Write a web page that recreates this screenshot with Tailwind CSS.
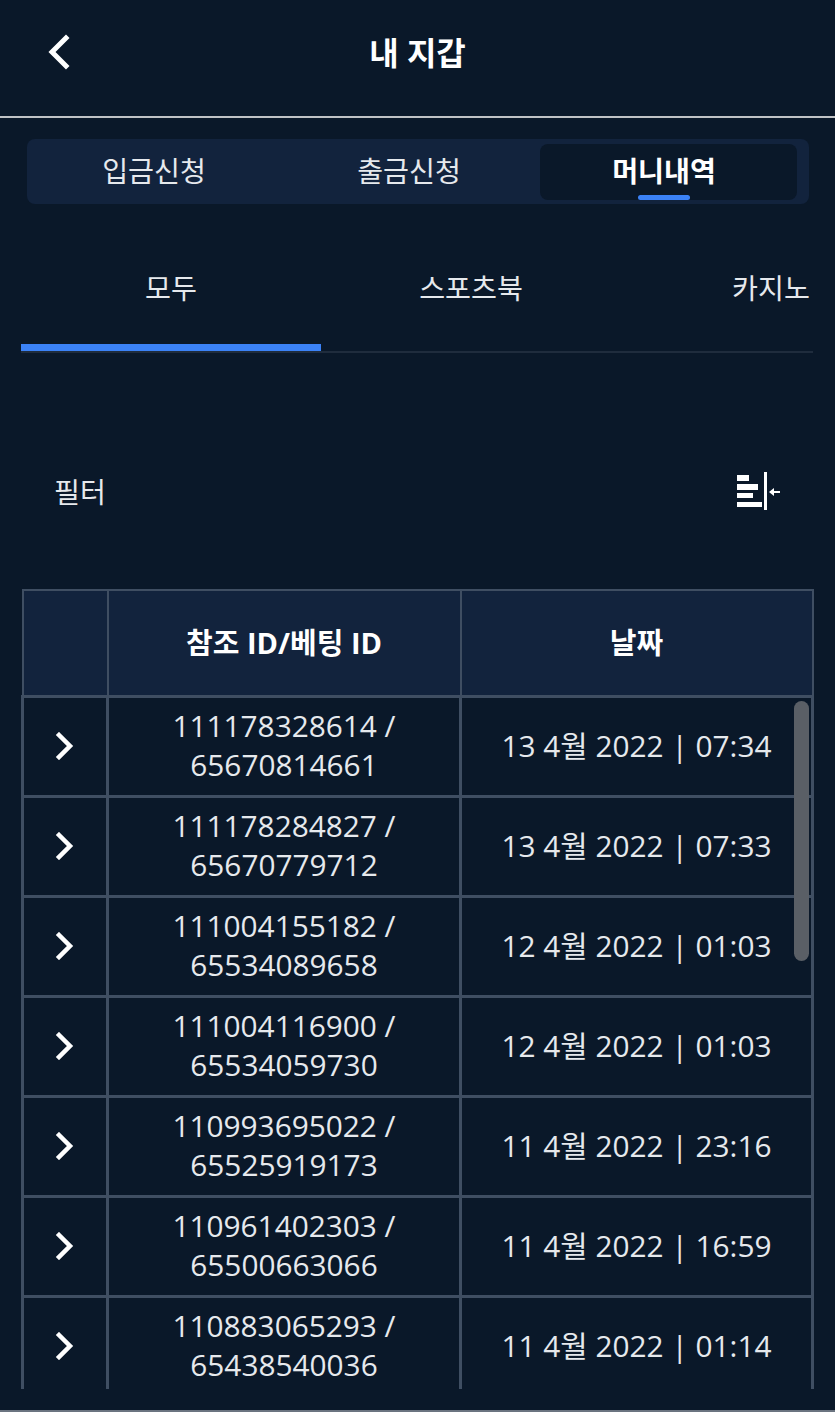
<!DOCTYPE html>
<html lang="ko">
<head>
  <meta charset="UTF-8">
  <meta name="viewport" content="width=device-width, initial-scale=1.0">
  <title>내 지갑</title>
  <script src="https://cdn.jsdelivr.net/npm/@tailwindcss/browser@4"></script>
</head>
<body class="bg-[#0a1829] text-white font-['Noto_Sans','Noto_Sans_CJK_KR',sans-serif]">
  <div class="h-[1412px] w-[835px] overflow-hidden flex flex-col border-b-2 border-[#6b7480]">
    <!-- Header -->
    <header class="h-[118px] shrink-0 flex items-center justify-center relative border-b-2 border-[#bfc2c5] pb-[10px]">
      <svg class="absolute left-[46px] top-[34px]" width="26" height="36" viewBox="0 0 26 36" fill="none" stroke="white" stroke-width="5" stroke-linecap="square"><path d="M20 4 L6 18 L20 32"/></svg>
      <h1 class="text-[32px] font-bold leading-none">내 지갑</h1>
    </header>

    <!-- Wallet tabs -->
    <div class="mx-[27px] mt-[21px] h-[65px] w-[782px] rounded-lg bg-[#12233d] flex items-center pr-[12px] text-[28.2px]">
      <div class="w-[254px] text-center text-[#e6e9ed]">입금신청</div>
      <div class="w-[256px] text-center text-[#e6e9ed]">출금신청</div>
      <div class="relative ml-[3px] h-[56px] w-[257px] rounded-lg bg-[#0a1829] flex items-center justify-center pr-[9px] font-bold">
        머니내역
        <span class="absolute bottom-0 left-[98px] h-[5px] w-[52px] rounded-sm bg-[#3b82f6]"></span>
      </div>
    </div>

    <!-- Category tabs -->
    <div class="mx-[21px] mt-[56px] w-[792px] h-[93px] flex overflow-hidden border-b-2 border-[#1f2c3d] text-[28.2px] text-[#e6e9ed]">
      <div class="w-[300px] shrink-0 h-[91px] border-b-[7px] border-[#3b82f6] text-center pt-[7px]">모두</div>
      <div class="w-[300px] shrink-0 text-center pt-[7px]">스포츠북</div>
      <div class="w-[300px] shrink-0 text-center pt-[7px]">카지노</div>
    </div>

    <!-- Filter -->
    <div class="mt-[120px] h-[40px] pl-[54px] pr-[55px] flex items-center justify-between text-[28.2px] text-[#e6e9ed]">
      <span class="pb-[2px]">필터</span>
      <svg class="overflow-visible" width="43" height="40" viewBox="0 0 43 40" fill="white">
        <rect x="0" y="2" width="12" height="6"/>
        <rect x="0" y="11" width="21" height="6"/>
        <rect x="0" y="20" width="16" height="5"/>
        <rect x="0" y="29" width="25" height="5"/>
        <rect x="27" y="-1" width="3" height="38"/>
        <path d="M32 19 L37 15 L37 18 L43 18 L43 20 L37 20 L37 23 Z"/>
      </svg>
    </div>

    <!-- Table -->
    <div class="relative mt-[76px] ml-[21px] w-[793px] h-[800px] overflow-hidden">
      <table class="w-full table-fixed border-collapse text-center text-[#e6e9ed] text-[29.8px] leading-[39px] font-['Open_Sans','Noto_Sans_CJK_KR',sans-serif]">
        <colgroup>
          <col class="w-[85px]">
          <col class="w-[353px]">
          <col>
        </colgroup>
        <thead>
          <tr class="h-[106px] bg-[#12233d] text-white font-bold text-[29px]">
            <th class="border-2 border-[#3f4e62]"></th>
            <th class="border-2 border-[#3f4e62]">참조 ID/베팅 ID</th>
            <th class="border-2 border-[#3f4e62]">날짜</th>
          </tr>
        </thead>
        <tbody>
          <tr class="h-[100px]">
            <td class="border-[3px] border-[#3f4e62]"><svg class="mx-auto" width="20" height="28" viewBox="0 0 20 28" fill="none" stroke="white" stroke-width="4.5" stroke-linecap="square"><path d="M4 3 L15 14 L4 25"/></svg></td>
            <td class="border-[3px] border-[#3f4e62] pb-[2px]">111178328614 /<br>65670814661</td>
            <td class="border-[3px] border-[#3f4e62] pb-[2px]">13 4월 2022 | 07:34</td>
          </tr>
          <tr class="h-[100px]">
            <td class="border-[3px] border-[#3f4e62]"><svg class="mx-auto" width="20" height="28" viewBox="0 0 20 28" fill="none" stroke="white" stroke-width="4.5" stroke-linecap="square"><path d="M4 3 L15 14 L4 25"/></svg></td>
            <td class="border-[3px] border-[#3f4e62] pb-[2px]">111178284827 /<br>65670779712</td>
            <td class="border-[3px] border-[#3f4e62] pb-[2px]">13 4월 2022 | 07:33</td>
          </tr>
          <tr class="h-[100px]">
            <td class="border-[3px] border-[#3f4e62]"><svg class="mx-auto" width="20" height="28" viewBox="0 0 20 28" fill="none" stroke="white" stroke-width="4.5" stroke-linecap="square"><path d="M4 3 L15 14 L4 25"/></svg></td>
            <td class="border-[3px] border-[#3f4e62] pb-[2px]">111004155182 /<br>65534089658</td>
            <td class="border-[3px] border-[#3f4e62] pb-[2px]">12 4월 2022 | 01:03</td>
          </tr>
          <tr class="h-[100px]">
            <td class="border-[3px] border-[#3f4e62]"><svg class="mx-auto" width="20" height="28" viewBox="0 0 20 28" fill="none" stroke="white" stroke-width="4.5" stroke-linecap="square"><path d="M4 3 L15 14 L4 25"/></svg></td>
            <td class="border-[3px] border-[#3f4e62] pb-[2px]">111004116900 /<br>65534059730</td>
            <td class="border-[3px] border-[#3f4e62] pb-[2px]">12 4월 2022 | 01:03</td>
          </tr>
          <tr class="h-[100px]">
            <td class="border-[3px] border-[#3f4e62]"><svg class="mx-auto" width="20" height="28" viewBox="0 0 20 28" fill="none" stroke="white" stroke-width="4.5" stroke-linecap="square"><path d="M4 3 L15 14 L4 25"/></svg></td>
            <td class="border-[3px] border-[#3f4e62] pb-[2px]">110993695022 /<br>65525919173</td>
            <td class="border-[3px] border-[#3f4e62] pb-[2px]">11 4월 2022 | 23:16</td>
          </tr>
          <tr class="h-[100px]">
            <td class="border-[3px] border-[#3f4e62]"><svg class="mx-auto" width="20" height="28" viewBox="0 0 20 28" fill="none" stroke="white" stroke-width="4.5" stroke-linecap="square"><path d="M4 3 L15 14 L4 25"/></svg></td>
            <td class="border-[3px] border-[#3f4e62] pb-[2px]">110961402303 /<br>65500663066</td>
            <td class="border-[3px] border-[#3f4e62] pb-[2px]">11 4월 2022 | 16:59</td>
          </tr>
          <tr class="h-[100px]">
            <td class="border-[3px] border-[#3f4e62]"><svg class="mx-auto" width="20" height="28" viewBox="0 0 20 28" fill="none" stroke="white" stroke-width="4.5" stroke-linecap="square"><path d="M4 3 L15 14 L4 25"/></svg></td>
            <td class="border-[3px] border-[#3f4e62] pb-[2px]">110883065293 /<br>65438540036</td>
            <td class="border-[3px] border-[#3f4e62] pb-[2px]">11 4월 2022 | 01:14</td>
          </tr>
        </tbody>
      </table>
      <!-- Scrollbar -->
      <div class="absolute left-[773px] top-[112px] h-[260px] w-[15px] rounded-full bg-[#5a5f66]"></div>
    </div>
  </div>
</body>
</html>
